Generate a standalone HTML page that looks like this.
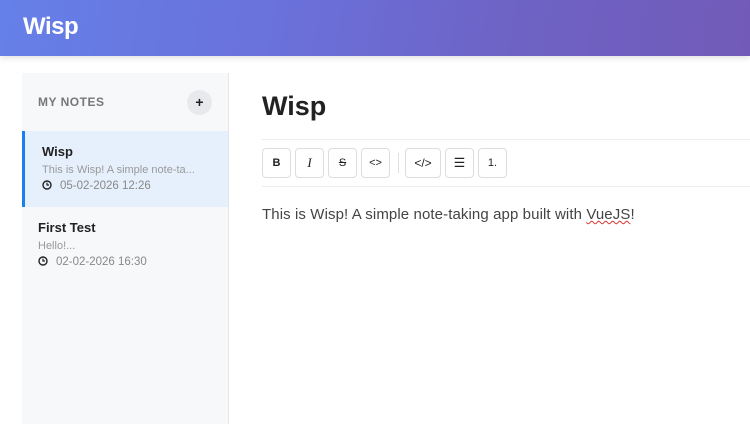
<!DOCTYPE html>
<html><head><style>
*{margin:0;padding:0;box-sizing:border-box}
body{width:750px;height:424px;overflow:hidden;background:#fff;font-family:"Liberation Sans",sans-serif;position:relative}
.hdr{position:absolute;left:0;top:0;width:750px;height:56px;background:linear-gradient(100deg,#6580e8 0%,#6a72dc 35%,#6e62c4 70%,#725bb8 100%);box-shadow:0 2px 6px rgba(0,0,0,.12)}
.hdr h1{position:absolute;left:23px;top:13px;color:#fff;font-size:24px;font-weight:bold;letter-spacing:-0.5px}
.side{position:absolute;left:22px;top:73px;width:207px;height:351px;background:#f7f8fa;border-right:1px solid #e6e6e6}
.side .t{position:absolute;left:16px;top:22px;font-size:12px;font-weight:bold;color:#777;letter-spacing:0.5px}
.plus{position:absolute;left:165px;top:17px;width:25px;height:25px;border-radius:50%;background:#e8e9ec;text-align:center;line-height:24px;font-weight:bold;font-size:14px;color:#222}
.n{position:absolute;left:0;width:206px;height:76px}
.n.a{top:58px;background:#e6f0fd;border-left:3px solid #1a7ff0}
.n.b{top:134px}
.n .tt{position:absolute;left:17px;top:13px;font-size:13px;font-weight:bold;color:#222}
.n.b .tt{left:16px}
.n .p{position:absolute;left:17px;top:33px;font-size:11px;color:#999}
.n.b .p{left:16px}
.n .d{position:absolute;left:17px;top:49px;font-size:11.5px;color:#888}
.n.b .d{left:16px}
.n .d svg{vertical-align:-1px;margin-right:8px}
.main h2{position:absolute;left:262px;top:91px;font-size:27px;font-weight:bold;color:#222}
.ln{position:absolute;left:262px;width:488px;height:1px;background:#ececec}
.tb{position:absolute;top:148px;height:30px;border:1px solid #ddd;border-radius:4px;background:#fff;text-align:center;line-height:28px;font-size:11px;color:#222}
.sep{position:absolute;left:398px;top:153px;width:1px;height:20px;background:#e0e0e0}
.txt{position:absolute;left:262px;top:206px;font-size:15px;color:#444;letter-spacing:0.1px}
.txt u{text-decoration:underline wavy #d33;text-decoration-thickness:1px}
</style></head><body>
<div class="hdr"><h1>Wisp</h1></div>
<div class="side">
<div class="t">MY NOTES</div><div class="plus">+</div>
<div class="n a"><div class="tt">Wisp</div><div class="p">This is Wisp! A simple note-ta...</div><div class="d"><svg width="10" height="10" viewBox="0 0 10 10"><circle cx="5" cy="5" r="4" fill="none" stroke="#222" stroke-width="1.4"/><path d="M5 2.6V5h2" fill="none" stroke="#222" stroke-width="1.2"/></svg>05-02-2026 12:26</div></div>
<div class="n b"><div class="tt">First Test</div><div class="p">Hello!...</div><div class="d"><svg width="10" height="10" viewBox="0 0 10 10"><circle cx="5" cy="5" r="4" fill="none" stroke="#222" stroke-width="1.4"/><path d="M5 2.6V5h2" fill="none" stroke="#222" stroke-width="1.2"/></svg>02-02-2026 16:30</div></div>
</div>
<div class="main">
<h2>Wisp</h2>
<div class="ln" style="top:139px"></div>
<div class="tb" style="left:262px;width:29px;font-weight:bold">B</div>
<div class="tb" style="left:295px;width:29px;font-style:italic;font-family:'Liberation Serif',serif;font-size:13px">I</div>
<div class="tb" style="left:328px;width:29px;text-decoration:line-through">S</div>
<div class="tb" style="left:361px;width:29px">&lt;&gt;</div>
<div class="sep"></div>
<div class="tb" style="left:405px;width:36px;font-size:12px">&lt;/&gt;</div>
<div class="tb" style="left:445px;width:29px;font-size:13px">☰</div>
<div class="tb" style="left:478px;width:29px">1.</div>
<div class="ln" style="top:186px"></div>
<div class="txt">This is Wisp! A simple note-taking app built with <u>VueJS</u>!</div>
</div>
</body></html>
